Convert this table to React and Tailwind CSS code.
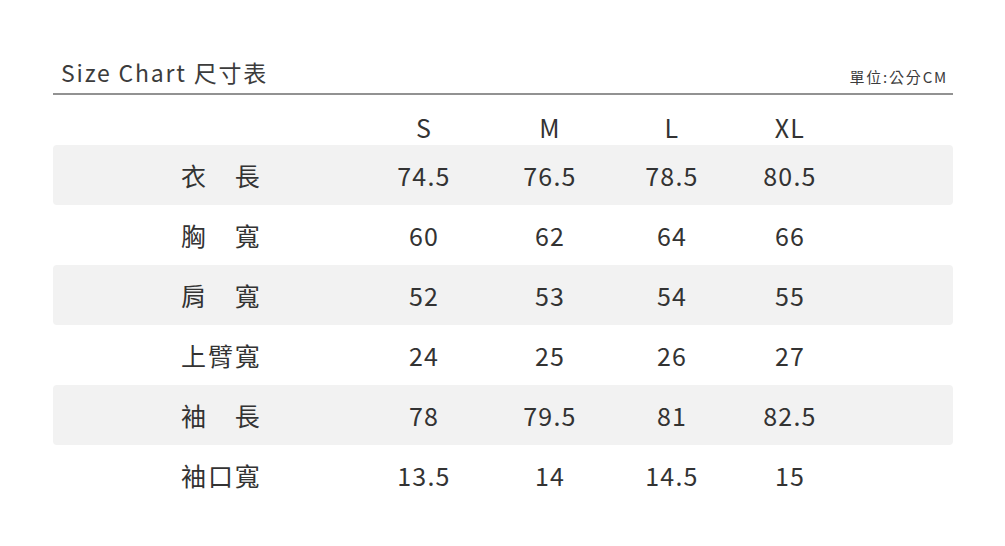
export default function App() {
  const sizes = ["S", "M", "L", "XL"];
  const rows = [
    { label: ["衣", "長"], vals: ["74.5", "76.5", "78.5", "80.5"] },
    { label: ["胸", "寬"], vals: ["60", "62", "64", "66"] },
    { label: ["肩", "寬"], vals: ["52", "53", "54", "55"] },
    { label: ["上", "臂", "寬"], vals: ["24", "25", "26", "27"] },
    { label: ["袖", "長"], vals: ["78", "79.5", "81", "82.5"] },
    { label: ["袖", "口", "寬"], vals: ["13.5", "14", "14.5", "15"] },
  ];
  const grid = "grid grid-cols-[336px_70px_182px_62px_174px] items-center";
  return (
    <div
      className="w-[1005px] h-[546px] bg-white text-[#333]"
      style={{ fontFamily: '"Noto Sans CJK TC", "Noto Sans", sans-serif' }}
    >
      <div className="ml-[53px] w-[900px] pt-[57px]">
        <div className="flex items-end justify-between border-b-2 border-[#929292] pl-[8px] pr-[5px] pb-[6px]">
          <span className="text-[23px] leading-[30px] tracking-[1.8px] text-[#3c3c3c]">Size Chart 尺寸表</span>
          <span className="text-[15px] leading-[20px] tracking-[1.8px] text-[#3c3c3c]">單位:公分CM</span>
        </div>
        <div className={`${grid} h-[36px] mt-[14px] text-[25px] tracking-[1.2px]`}>
          <div />
          {sizes.map((s) => (
            <div key={s} className="text-center leading-none">{s}</div>
          ))}
        </div>
        {rows.map((r, i) => (
          <div
            key={i}
            className={`${grid} h-[60px] rounded-[4px] text-[25px] tracking-[1.2px] ${i % 2 === 0 ? "bg-[#f2f2f2]" : ""}`}
          >
            <div className="flex justify-center">
              <div className="w-[80px] flex justify-between leading-none">
                {r.label.map((c, j) => (
                  <span key={j}>{c}</span>
                ))}
              </div>
            </div>
            {r.vals.map((v, j) => (
              <div key={j} className="text-center leading-none">{v}</div>
            ))}
          </div>
        ))}
      </div>
    </div>
  );
}
